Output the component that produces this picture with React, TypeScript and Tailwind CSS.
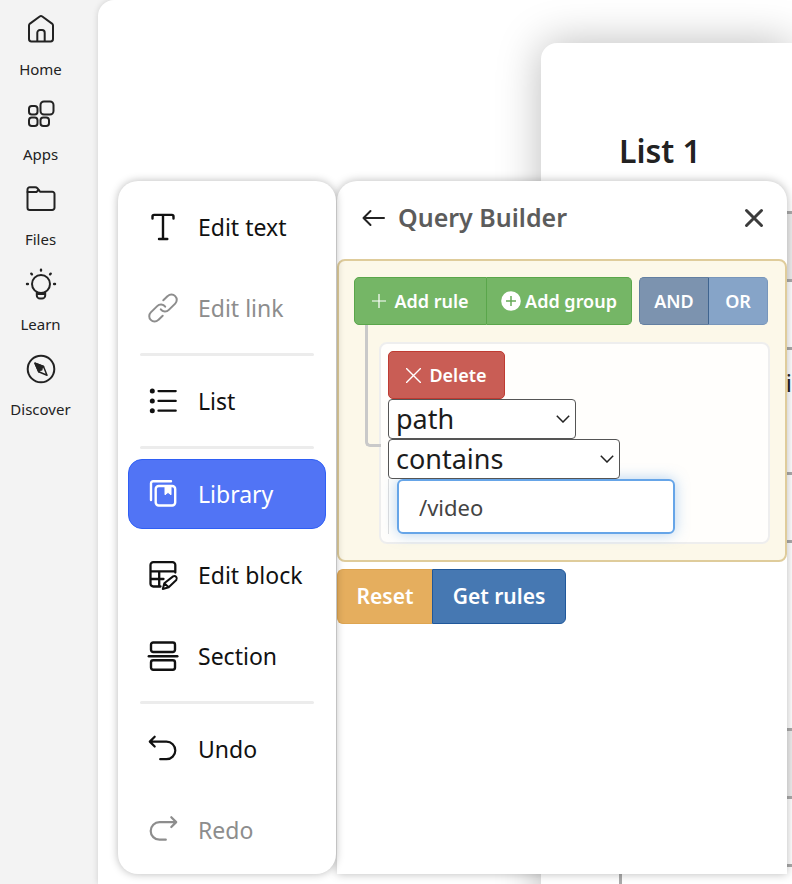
import type { ReactNode } from "react";

type IconProps = { children: ReactNode; size?: string; stroke?: number };

function Icon({ children, size = "size-8", stroke = 2 }: IconProps) {
  return (
    <svg
      viewBox="0 0 32 32"
      className={`${size} shrink-0`}
      fill="none"
      stroke="currentColor"
      strokeWidth={stroke}
      strokeLinecap="round"
      strokeLinejoin="round"
      aria-hidden="true"
    >
      {children}
    </svg>
  );
}

const navItems = [
  {
    label: "Home",
    icon: (
      <>
        <path d="M4 12.6c0-.8.4-1.500 1-2L14.700 3.500a2.200 2.200 0 0 1 2.600 0L27 10.600c.6.5 1 1.200 1 2V26a2.400 2.400 0 0 1-2.400 2.400H6.400A2.400 2.400 0 0 1 4 26z" />
        <path d="M12.300 28v-8.300a2.600 2.600 0 0 1 2.600-2.600h2.200a2.600 2.600 0 0 1 2.600 2.600V28" />
      </>
    ),
  },
  {
    label: "Apps",
    icon: (
      <>
        <rect x="15.500" y="3.500" width="13" height="13" rx="3.500" />
        <rect x="4" y="8" width="8.500" height="8.500" rx="2.800" />
        <rect x="4" y="19.500" width="8.500" height="8.500" rx="2.800" />
        <rect x="15.500" y="19.500" width="8.500" height="8.500" rx="2.800" />
      </>
    ),
  },
  {
    label: "Files",
    icon: (
      <>
        <path d="M2.500 8V6.500A2.300 2.300 0 0 1 4.800 4.200h5.500c.8 0 1.500.4 2 1L15 8.700h12.200a2.300 2.300 0 0 1 2.300 2.300v13.700a2.300 2.300 0 0 1-2.300 2.300H4.800a2.300 2.300 0 0 1-2.300-2.300z" />
        <path d="M2.500 8.900H11.500L13.500 7" />
      </>
    ),
  },
  {
    label: "Learn",
    icon: (
      <>
        <circle cx="16" cy="16" r="9" />
        <path d="M11.800 24v3.400a3.200 3.200 0 0 0 3.200 3.200h2a3.200 3.200 0 0 0 3.200-3.200V24M12 26h8" />
        <path d="M16 1.700v.8M6.300 5.700l.6.600M25.700 5.700l-.6.600M2 16h.9M29.100 16h.9" strokeWidth="2.400" />
      </>
    ),
  },
  {
    label: "Discover",
    icon: (
      <>
        <circle cx="16" cy="16" r="13.300" />
        <path d="M10 10.200l8.500 3.300 3.500 8.700-8.300-3.500z" strokeWidth="1.500" />
        <path d="M10 10.200l8.500 3.300-4.800 5.200z" fill="currentColor" strokeWidth="1.500" />
        <circle cx="16.300" cy="16.400" r="1.300" fill="currentColor" stroke="none" />
      </>
    ),
  },
];

type Tool = { label: string; icon: ReactNode; disabled?: boolean; active?: boolean };

const toolGroups: Tool[][] = [
  [
    {
      label: "Edit text",
      icon: <path d="M5.500 7.500V5.500a1.600 1.600 0 0 1 1.600-1.600h17.800a1.600 1.600 0 0 1 1.600 1.600V7.500M16 3.900V28M12 28h8.300" strokeWidth="2.400" />,
    },
    {
      label: "Edit link",
      disabled: true,
      icon: (
        <>
          <path d="M16.300 8.200l4.400-4.100a5.300 5.300 0 0 1 7.500 7.500l-6.400 6.300a5.300 5.300 0 0 1-8-.6" />
          <path d="M15.700 23.800l-4.400 4.100a5.300 5.300 0 0 1-7.500-7.500l6.400-6.300a5.300 5.300 0 0 1 8 .6" />
        </>
      ),
    },
  ],
  [
    {
      label: "List",
      icon: (
        <>
          <path d="M11.500 6.100h17.200M11.500 15.900h17.200M11.500 25.700h17.200" strokeWidth="2.300" />
          <g fill="currentColor" stroke="none">
            <circle cx="5.300" cy="6.100" r="2.500" />
            <circle cx="5.300" cy="15.900" r="2.500" />
            <circle cx="5.300" cy="25.700" r="2.500" />
          </g>
        </>
      ),
    },
  ],
  [
    {
      label: "Library",
      active: true,
      icon: (
        <>
          <path d="M4 22V5.400A2.200 2.200 0 0 1 6.200 3.200H24" strokeWidth="2.400" />
          <rect x="8.700" y="8" width="19.500" height="19.500" rx="3" strokeWidth="2.400" />
          <path d="M18 8v8.800l3-2.400 3 2.400V8z" fill="currentColor" strokeWidth="1" />
        </>
      ),
    },
    {
      label: "Edit block",
      icon: (
        <>
          <path d="M13.500 27.500H6.300A2.800 2.800 0 0 1 3.500 24.700V6a2.800 2.800 0 0 1 2.800-2.800h19.200A2.800 2.800 0 0 1 28.300 6v7.500M3.500 12.300h24.800M3.500 20h13M12.200 12.300v15.200" strokeWidth="2.300" />
          <path d="M15.800 30l1.500-5.700 8.800-6.900a2.500 2.500 0 0 1 3.200 3.700l-7.600 7.200z M17.300 24.300l4.400 4" />
        </>
      ),
    },
    {
      label: "Section",
      icon: (
        <>
          <rect x="4" y="2.500" width="24" height="9.500" rx="2.200" strokeWidth="2.400" />
          <path d="M1.800 16.200h28.500" strokeWidth="2.400" />
          <rect x="4" y="20.300" width="24" height="9.500" rx="2.200" strokeWidth="2.400" />
        </>
      ),
    },
  ],
  [
    {
      label: "Undo",
      icon: <path d="M7.700 3.700L2.800 8.600l4.900 4.900M3 8.600h16.500a8.800 8.800 0 0 1 0 17.600h-6.300" strokeWidth="2.200" />,
    },
    {
      label: "Redo",
      disabled: true,
      icon: <path d="M24.300 3.200l4.900 4.900-4.900 4.900M29 8.100H12.500a8.800 8.800 0 0 0 0 17.600h6.300" strokeWidth="2.200" />,
    },
  ],
];

function SideNav() {
  return (
    <nav className="flex w-[98px] shrink-0 flex-col gap-[3px] pt-[13px] pr-[17px] text-[#222]">
      {navItems.map((item) => (
        <a key={item.label} href="#" className="flex h-[82px] flex-col items-center gap-3 text-[15px] leading-6">
          <Icon>{item.icon}</Icon>
          {item.label}
        </a>
      ))}
    </nav>
  );
}

function ToolPanel() {
  return (
    <div className="z-10 flex w-[218px] flex-col gap-[11px] rounded-[20px] bg-white px-[10px] pt-[11px] shadow-[0_0_8px_rgba(0,0,0,0.28)]">
      {toolGroups.map((group, index) => (
        <div key={index} className="flex flex-col gap-[11px]">
          {index > 0 && <hr className="-my-px mx-3 h-[3px] rounded-full border-0 bg-[#ececec]" />}
          {group.map((tool) => (
            <button
              key={tool.label}
              type="button"
              disabled={tool.disabled}
              className={`flex h-[70px] items-center gap-[19px] rounded-[14px] px-[18px] text-[23px] ${
                tool.active ? "border border-[#2f5ff5] bg-[#5174f5] text-white" : "border border-transparent text-[#111] disabled:text-[#8d8d8d]"
              }`}
            >
              <Icon>{tool.icon}</Icon>
              {tool.label}
            </button>
          ))}
        </div>
      ))}
    </div>
  );
}

type SelectProps = { label: string; width: string; options: string[] };

function RuleSelect({ label, width, options }: SelectProps) {
  return (
    <div className={`relative ${width}`}>
      <select
        aria-label={label}
        className="block h-10 w-full appearance-none rounded-[4px] border border-[#555] bg-white pl-[7px] text-[27px] leading-9 text-[#1c1c1c]"
      >
        {options.map((option) => (
          <option key={option}>{option}</option>
        ))}
      </select>
      <svg viewBox="0 0 14 8" className="pointer-events-none absolute top-4 right-[6px] h-2 w-[14px]" fill="none" stroke="#222" strokeWidth="1.500" aria-hidden="true">
        <path d="M.8.800L7 7 13.200.800" />
      </svg>
    </div>
  );
}

function QueryBuilder() {
  return (
    <section className="w-[450px] rounded-t-[20px] bg-white shadow-[0_0_10px_rgba(0,0,0,0.28)]">
      <header className="flex h-[78px] items-center pr-[21px] pb-[5px] pl-[25px]">
        <button type="button" aria-label="Back" className="text-[#222]">
          <svg viewBox="0 0 24 18" className="h-[18px] w-6" fill="none" stroke="currentColor" strokeWidth="2" strokeLinecap="round" strokeLinejoin="round">
            <path d="M8.500 2L1.500 9l7 7M1.500 9H22" />
          </svg>
        </button>
        <h2 className="ml-3 flex-1 text-[25px] font-semibold text-[#5c5c5c]">Query Builder</h2>
        <button type="button" aria-label="Close" className="text-[#3c3c3c]">
          <svg viewBox="0 0 24 24" className="size-6" fill="none" stroke="currentColor" strokeWidth="3" strokeLinecap="round">
            <path d="M4.500 4.500l15 15M19.500 4.500l-15 15" />
          </svg>
        </button>
      </header>

      <div className="rounded-[8px] border-2 border-[#dfcc9b] bg-[#fcf8e9] px-[15px] py-4">
        <div className="flex gap-[7px] pr-[2px] text-[18px] font-semibold text-white">
          <div className="flex h-12 w-[278px]">
            <button type="button" className="flex w-[133px] items-center justify-center gap-2 rounded-l-[5px] border border-[#5aa64b] bg-[#75b666]">
              <svg viewBox="0 0 14 14" className="size-[14px]" stroke="currentColor" strokeWidth="1.200" aria-hidden="true">
                <path d="M7 0v14M0 7h14" />
              </svg>
              Add rule
            </button>
            <button type="button" className="flex flex-1 items-center justify-center gap-1 rounded-r-[5px] border border-l-0 border-[#5aa64b] bg-[#75b666]">
              <svg viewBox="0 0 20 20" className="size-5" aria-hidden="true">
                <circle cx="10" cy="10" r="9.800" fill="white" />
                <path d="M10 5v10M5 10h10" stroke="#68ab5a" strokeWidth="1.500" />
              </svg>
              Add group
            </button>
          </div>
          <div className="flex flex-1">
            <button type="button" className="w-[70px] rounded-l-[5px] border border-[#637fa1] border-r-[#3f648f] bg-[#7c93af]">AND</button>
            <button type="button" className="flex-1 rounded-r-[5px] border border-l-0 border-[#7896bb] bg-[#86a4c8]">OR</button>
          </div>
        </div>

        <div className="relative mt-[17px] ml-[25px] rounded-[8px] border-2 border-[#eee] bg-[#fffefc] px-[7px] py-[7px] pb-2">
          <span className="absolute -top-[19px] right-full h-[122px] w-4 rounded-bl-[5px] border-b-[3px] border-l-[3px] border-[#c9c9c9]" />
          <button type="button" className="flex h-12 w-[117px] items-center justify-center gap-2 rounded-[5px] border border-[#bf3b32] bg-[#c95d55] text-[18px] font-semibold text-white">
            <svg viewBox="0 0 15 15" className="size-[15px]" stroke="currentColor" strokeWidth="1.400" aria-hidden="true">
              <path d="M0 0l15 15M15 0L0 15" />
            </svg>
            Delete
          </button>
          <RuleSelect label="Field" width="w-[188px]" options={["path", "title"]} />
          <RuleSelect label="Operator" width="w-[232px]" options={["contains", "equal"]} />
          <div className="border-l border-[#ddd] pl-2">
            <input
              aria-label="Value"
              defaultValue="/video"
              className="block h-[55px] w-[278px] rounded-[6px] border-2 border-[#66a5e8] bg-white px-5 text-[22px] text-[#444] shadow-[0_0_14px_rgba(102,165,232,0.5)] outline-none"
            />
          </div>
        </div>
      </div>

      <div className="mt-[7px] flex h-[55px] text-[21px] font-semibold text-white">
        <button type="button" className="w-[95px] rounded-l-[6px] border border-r-0 border-[#dea551] bg-[#e5ae5e]">Reset</button>
        <button type="button" className="w-[134px] rounded-r-[6px] border border-[#20589b] bg-[#4678b2]">Get rules</button>
      </div>
    </section>
  );
}

function DocumentPage() {
  return (
    <article className="mt-[43px] ml-[443px] h-full rounded-tl-[16px] bg-white pt-[84px] pl-[78px] text-[#222] shadow-[0_0_44px_rgba(0,0,0,0.27)]">
      <h1 className="text-[32px] leading-[48px] font-semibold">List 1</h1>
      <table className="mt-9 w-full border-collapse">
        <tbody>
          <tr className="h-[68px] border-[3px] border-r-0 border-[#aaa] bg-[#ededed]"><td /></tr>
          <tr className="h-[68px] border-[3px] border-r-0 border-[#aaa]"><td /></tr>
          <tr className="h-[125px] border-[3px] border-r-0 border-[#aaa]"><td className="pb-14 text-right text-[24px] leading-8">i</td></tr>
          <tr className="h-[68px] border-[3px] border-r-0 border-[#aaa]"><td /></tr>
        </tbody>
      </table>
      <table className="mt-[185px] w-full border-collapse">
        <tbody>
          <tr className="h-[68px] border-[3px] border-r-0 border-[#aaa] bg-[#ededed]"><td /></tr>
          <tr className="h-[68px] border-[3px] border-r-0 border-[#aaa]"><td /></tr>
          <tr className="h-[68px] border-[3px] border-r-0 border-[#aaa]"><td /></tr>
        </tbody>
      </table>
    </article>
  );
}

export default function App() {
  return (
    <div className="flex h-screen overflow-hidden bg-[#f3f3f3] font-['Noto_Sans','Open_Sans',sans-serif]">
      <SideNav />
      <main className="relative flow-root min-w-0 flex-1 overflow-hidden rounded-tl-[16px] bg-white shadow-[0_0_6px_rgba(0,0,0,0.15)]">
        <DocumentPage />
        <div className="absolute top-[181px] bottom-[10px] left-5 flex gap-px">
          <ToolPanel />
          <QueryBuilder />
        </div>
      </main>
    </div>
  );
}
